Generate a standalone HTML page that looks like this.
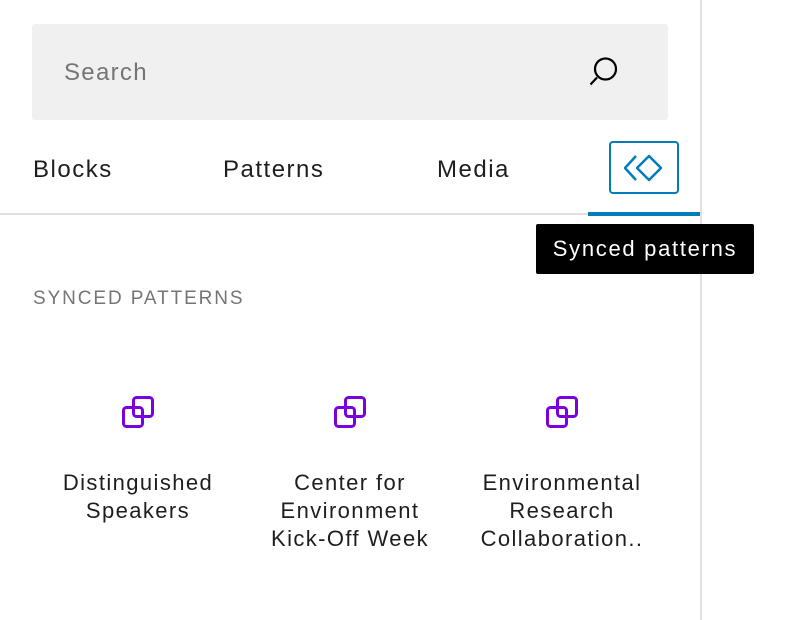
<!DOCTYPE html>
<html><head><meta charset="utf-8"><style>
*{margin:0;padding:0;box-sizing:border-box}
body{width:804px;height:620px;background:#fff;font-family:"Liberation Sans",Arial,sans-serif;position:relative;overflow:hidden;color:#1e1e1e}
.vr{position:absolute;left:700px;top:0;width:2px;height:620px;background:#e0e0e0}
.search{position:absolute;left:32px;top:24px;width:636px;height:96px;background:#f0f0f0;border-radius:3px}
.search span{position:absolute;left:32px;top:35px;font-size:24px;color:#757575;letter-spacing:1.3px}
.tab{position:absolute;top:156px;font-size:24px;color:#1e1e1e;letter-spacing:1.5px;font-weight:500}
.hr{position:absolute;left:0;top:213px;width:700px;height:2px;background:#e0e0e0}
.ul{position:absolute;left:588px;top:212px;width:112px;height:4px;background:#007cba}
.tb{position:absolute;left:609px;top:141px;width:70px;height:53px;border:2px solid #007cba;border-radius:4px}
.tip{position:absolute;left:536px;top:224px;width:218px;height:50px;background:#000;color:#fff;font-size:22px;line-height:50px;text-align:center;border-radius:2px;letter-spacing:1.7px}
.hd{position:absolute;left:33px;top:288px;font-size:19px;color:#757575;letter-spacing:1.9px}
.item{position:absolute;top:469px;width:200px;text-align:center;font-size:22px;line-height:28px;color:#1e1e1e;letter-spacing:1.4px}
.ic{position:absolute;top:394px}
</style></head><body>
<div class="vr"></div>
<div class="search"><span>Search</span>
<svg style="position:absolute;left:556px;top:32px" width="34" height="34" viewBox="0 0 34 34"><circle cx="17.5" cy="13" r="10.5" fill="none" stroke="#000" stroke-width="2.2"/><line x1="9" y1="21.5" x2="2.5" y2="28.5" stroke="#000" stroke-width="2.2"/></svg>
</div>
<div class="tab" style="left:33px">Blocks</div>
<div class="tab" style="left:223px">Patterns</div>
<div class="tab" style="left:437px">Media</div>
<div class="hr"></div>
<div class="tb"><svg style="position:absolute;left:13px;top:8px" width="42" height="34" viewBox="0 0 42 34"><path d="M12 5 L1 17 L12 29" fill="none" stroke="#007cba" stroke-width="2.5"/><path d="M25 5 L37 17 L25 29 L13 17 Z" fill="none" stroke="#007cba" stroke-width="2.5" stroke-linejoin="round"/></svg></div>
<div class="ul"></div>
<div class="tip">Synced patterns</div>
<div class="hd">SYNCED PATTERNS</div>
<svg class="ic" style="left:120px" width="36" height="36" viewBox="0 0 36 36"><rect x="3.5" y="13.5" width="19" height="19" rx="3" fill="none" stroke="#7a00df" stroke-width="3"/><rect x="13.5" y="3.5" width="19" height="19" rx="3" fill="none" stroke="#7a00df" stroke-width="3"/></svg>
<svg class="ic" style="left:332px" width="36" height="36" viewBox="0 0 36 36"><rect x="3.5" y="13.5" width="19" height="19" rx="3" fill="none" stroke="#7a00df" stroke-width="3"/><rect x="13.5" y="3.5" width="19" height="19" rx="3" fill="none" stroke="#7a00df" stroke-width="3"/></svg>
<svg class="ic" style="left:544px" width="36" height="36" viewBox="0 0 36 36"><rect x="3.5" y="13.5" width="19" height="19" rx="3" fill="none" stroke="#7a00df" stroke-width="3"/><rect x="13.5" y="3.5" width="19" height="19" rx="3" fill="none" stroke="#7a00df" stroke-width="3"/></svg>
<div class="item" style="left:38px">Distinguished<br>Speakers</div>
<div class="item" style="left:250px">Center for<br>Environment<br>Kick-Off Week</div>
<div class="item" style="left:462px">Environmental<br>Research<br>Collaboration..</div>
</body></html>
